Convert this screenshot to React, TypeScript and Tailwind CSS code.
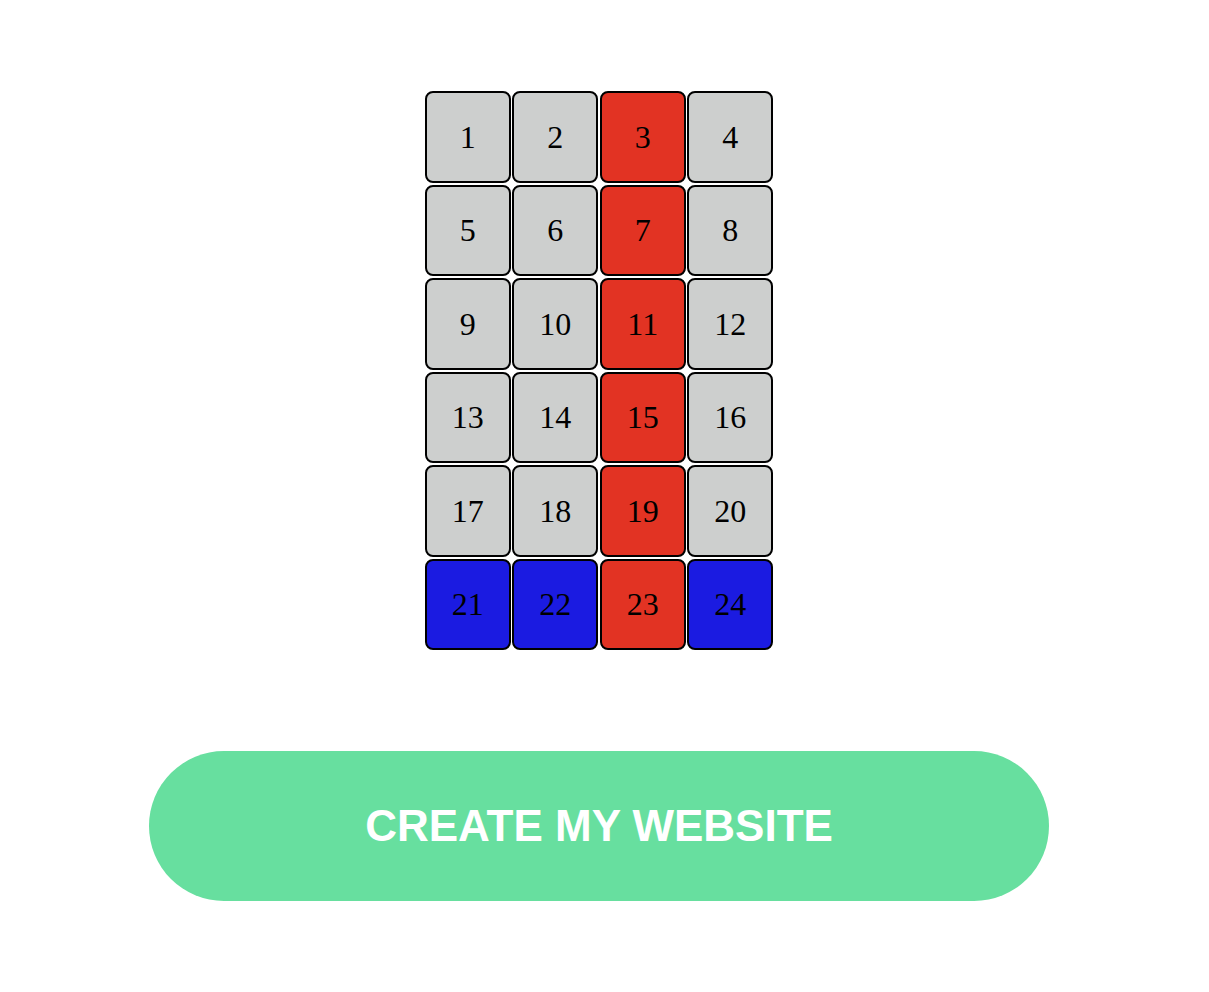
import React from "react";

const RED = new Set([3, 7, 11, 15, 19, 23]);
const BLUE = new Set([21, 22, 24]);

export default function App() {
  const cells = Array.from({ length: 24 }, (_, i) => i + 1);
  return (
    <div className="w-[1198px] min-h-[992px] bg-white flex flex-col items-center pt-[91px]">
      <div className="grid grid-cols-[repeat(4,86px)] auto-rows-[91.5px] gap-x-[1.5px] gap-y-[2px]">
        {cells.map((n) => {
          const bg = RED.has(n)
            ? "bg-[#e23323]"
            : BLUE.has(n)
            ? "bg-[#1b1be1]"
            : "bg-[#cdcfce]";
          return (
            <div
              key={n}
              className={`${bg} border-2 border-black rounded-lg flex items-center justify-center text-[32px] text-black leading-none`}
              style={{ fontFamily: '"Liberation Serif", "Times New Roman", serif' }}
            >
              {n}
            </div>
          );
        })}
      </div>
      <button
        className="mt-[101px] w-[900px] h-[150px] rounded-full bg-[#67df9f] text-white font-bold text-[44px] leading-none flex items-center justify-center"
        style={{ fontFamily: '"Liberation Sans", Arial, sans-serif' }}
      >
        CREATE MY WEBSITE
      </button>
    </div>
  );
}
